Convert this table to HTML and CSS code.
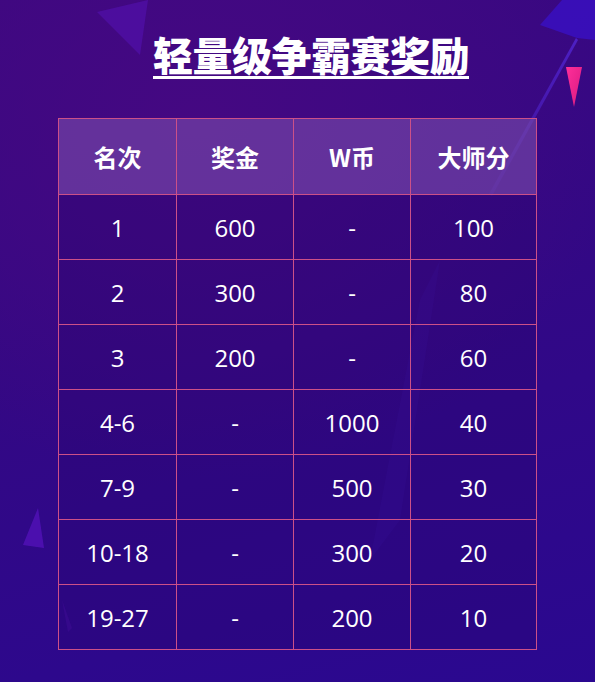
FILE: index.html
```html
<!DOCTYPE html>
<html lang="zh">
<head>
<meta charset="utf-8">
<title>轻量级争霸赛奖励</title>
<link rel="stylesheet" href="styles.css">
</head>
<body>
<div class="page">
  <svg class="deco" width="595" height="682" viewBox="0 0 595 682" aria-hidden="true">
    <defs>
      <linearGradient id="pink" x1="0" y1="0" x2="1" y2="1">
        <stop offset="0" stop-color="#ff2f9a"/>
        <stop offset="1" stop-color="#d81a80"/>
      </linearGradient>
      <linearGradient id="beam" x1="0" y1="0" x2="0" y2="1">
        <stop offset="0" stop-color="#5a30f0" stop-opacity="0.6"/>
        <stop offset="1" stop-color="#5a30f0" stop-opacity="0.15"/>
      </linearGradient>
    </defs>
    <polygon points="97,12 148,0 140,55" fill="#5410b0" opacity="0.6"/>
    <polygon points="540,25 562,0 595,0 595,40 577,38" fill="#3a10c8" opacity="0.75"/>
    <polygon points="576,38 578,40 492,196 489,194" fill="url(#beam)"/>
    <polygon points="566,67 582,67 574,107" fill="url(#pink)"/>
    <polygon points="23,545 38,508 44,548" fill="#5212b8" opacity="0.8"/>
    <polygon points="62,600 72,628 68,632" fill="#4a10a8" opacity="0.5"/>
    <polygon points="420,300 440,260 400,520 370,560" fill="#4a20c0" opacity="0.14"/>
  </svg>
  <h1 class="title">轻量级争霸赛奖励</h1>
  <table class="rewards">
    <colgroup>
      <col class="c1"><col class="c2"><col class="c3"><col class="c4">
    </colgroup>
    <thead>
      <tr><th>名次</th><th>奖金</th><th>W币</th><th>大师分</th></tr>
    </thead>
    <tbody>
      <tr><td>1</td><td>600</td><td>-</td><td>100</td></tr>
      <tr><td>2</td><td>300</td><td>-</td><td>80</td></tr>
      <tr><td>3</td><td>200</td><td>-</td><td>60</td></tr>
      <tr><td>4-6</td><td>-</td><td>1000</td><td>40</td></tr>
      <tr><td>7-9</td><td>-</td><td>500</td><td>30</td></tr>
      <tr><td>10-18</td><td>-</td><td>300</td><td>20</td></tr>
      <tr><td>19-27</td><td>-</td><td>200</td><td>10</td></tr>
    </tbody>
  </table>
</div>
</body>
</html>
```
FILE: styles.css
```css
html, body {
  margin: 0;
  padding: 0;
}
body {
  width: 595px;
  height: 682px;
  overflow: hidden;
  background: #2e0888;
}
.page {
  position: relative;
  width: 595px;
  height: 682px;
  overflow: hidden;
  background:
    radial-gradient(ellipse 420px 360px at 200px 120px, rgba(70, 8, 130, 0.9), rgba(70, 8, 130, 0) 100%),
    linear-gradient(165deg, #3c0880 0%, #330884 45%, #2a0890 100%);
  font-family: "Open Sans", "Noto Sans CJK SC", sans-serif;
  color: #ffffff;
  display: flex;
  flex-direction: column;
  align-items: center;
}
.deco {
  position: absolute;
  left: 0;
  top: 0;
  pointer-events: none;
}
.title {
  position: relative;
  margin: 30px 0 0 27px;
  font-family: "Noto Sans CJK SC", sans-serif;
  font-weight: 900;
  font-size: 40px;
  line-height: 48px;
  letter-spacing: -0.5px;
  text-decoration: underline;
  text-decoration-thickness: 3px;
  text-underline-offset: 5px;
}
.rewards {
  position: relative;
  margin-top: 40px;
  border-collapse: collapse;
  table-layout: fixed;
  width: 478px;
  background: rgba(40, 4, 110, 0.3);
}
.c1 { width: 118px; }
.c2 { width: 117px; }
.c3 { width: 117px; }
.c4 { width: 126px; }
.rewards th,
.rewards td {
  border: 1px solid #cc5088;
  text-align: center;
  padding: 0;
}
.rewards th {
  height: 75px;
  background: rgba(160, 110, 200, 0.42);
  font-family: "Noto Sans CJK SC", sans-serif;
  font-weight: 700;
  font-size: 24px;
}
.rewards td {
  height: 64px;
  font-size: 24px;
  font-weight: 400;
}
```
